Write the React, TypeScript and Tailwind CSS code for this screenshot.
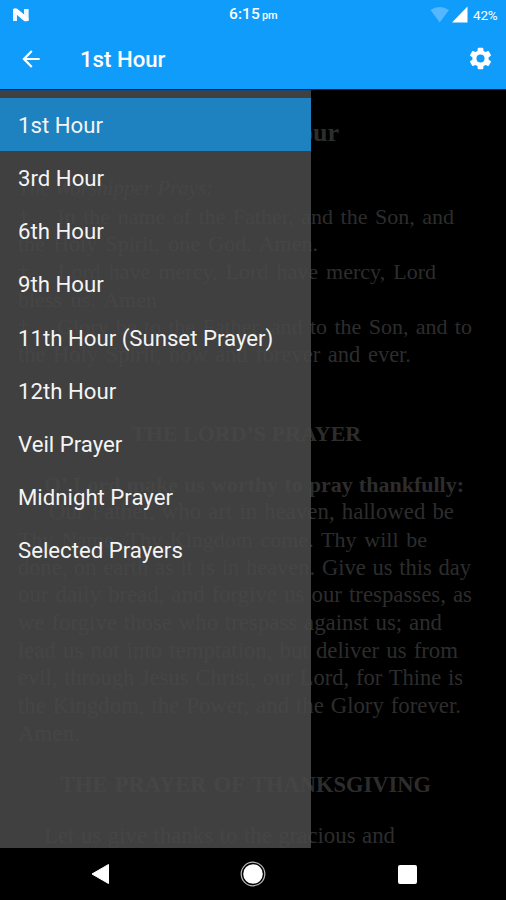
import React from "react";

type Line = { text: string; cls: string };

const lines: Line[] = [
  { text: "The First Hour", cls: "mt-[18px] ml-[167px] w-[172px] h-[49px] text-[26px] leading-[49px] font-bold" },
  { text: "The Worshipper Prays:", cls: "mt-[18px] ml-[18px] w-[194px] italic text-[21px]" },
  { text: "†\u2003\u2009In the name of the Father, and the Son, and", cls: "ml-[18px] w-[436px] text-[22px]" },
  { text: "the Holy Spirit, one God. Amen.", cls: "ml-[18px] w-[300px] text-[22px]" },
  { text: "†\u2003\u2009Lord have mercy, Lord have mercy, Lord", cls: "ml-[18px] w-[418px] text-[22px]" },
  { text: "bless us. Amen", cls: "ml-[18px] w-[139px] text-[22px]" },
  { text: "†\u2003\u2009Glory be to the Father, and to the Son, and to", cls: "ml-[18px] w-[454px] text-[22px]" },
  { text: "the Holy Spirit, now and forever and ever.", cls: "ml-[18px] w-[393px] text-[22.5px]" },
  { text: "THE LORD’S PRAYER", cls: "mt-[51px] ml-[131px] w-[230px] font-bold text-[22px]" },
  { text: "O’ Lord make us worthy to pray thankfully:", cls: "mt-[23px] ml-[44px] w-[420px] font-bold text-[22px]" },
  { text: "Our Father, who art in heaven, hallowed be", cls: "ml-[49px] w-[405px] text-[22.8px]" },
  { text: "Thy Name. Thy Kingdom come. Thy will be", cls: "ml-[18px] w-[409px] text-[22px]" },
  { text: "done, on earth as it is in heaven. Give us this day", cls: "ml-[18px] w-[453px] text-[22.5px]" },
  { text: "our daily bread, and forgive us our trespasses, as", cls: "ml-[18px] w-[454px] text-[22.8px]" },
  { text: "we forgive those who trespass against us; and", cls: "ml-[18px] w-[424px] text-[22.8px]" },
  { text: "lead us not into temptation, but deliver us from", cls: "ml-[18px] w-[440px] text-[22.8px]" },
  { text: "evil, through Jesus Christ, our Lord, for Thine is", cls: "ml-[18px] w-[445px] text-[22.5px]" },
  { text: "the Kingdom, the Power, and the Glory forever.", cls: "ml-[18px] w-[443px] text-[22.8px]" },
  { text: "Amen.", cls: "ml-[18px] w-[62px] text-[23px]" },
  { text: "THE PRAYER OF THANKSGIVING", cls: "mt-[23.5px] ml-[60px] w-[371px] font-bold text-[22.5px]" },
  { text: "Let us give thanks to the gracious and", cls: "mt-[23px] ml-[44px] w-[351px] text-[22.8px]" },
];

const items = [
  "1st Hour",
  "3rd Hour",
  "6th Hour",
  "9th Hour",
  "11th Hour (Sunset Prayer)",
  "12th Hour",
  "Veil Prayer",
  "Midnight Prayer",
  "Selected Prayers",
];

function StatusBar() {
  return (
    <div className="flex h-[29px] items-center text-white">
      <svg className="ml-[12px] h-[14px] w-[18px]" viewBox="0 0 18 14">
        <path d="M1 1h4v12H1zM12 1h4.5v12H12z" fill="#b9dfff" />
        <path d="M1 1.5Q2 0 5 .8L12 7V1h4.5v11.5Q14 14 12 12.8L5 6.8V13H1z" fill="#fff" fillOpacity=".75" />
        <path d="M1 1.5Q2 0 5 .8L16.5 10v2.5Q14 14 12 12.8L1 3.5z" fill="#fff" />
      </svg>
      <div className="ml-[199px] flex w-[60px] items-baseline pt-px font-medium">
        <span className="text-[15.5px] leading-5 tracking-[0.1px]">6:15</span>
        <span className="ml-[2px] text-[11px] leading-5">pm</span>
      </div>
      <svg className="ml-[141px] h-[17px] w-[39px]" viewBox="0 0 39 17">
        <path d="M0.5 4Q9.5-2 19 4L9.7 16.5z" fill="#55b7ff" />
        <path d="M37.5.5V16.5H22z" fill="#fff" />
      </svg>
      <span className="ml-[4px] text-[13.5px] leading-5 tracking-[-0.2px]">42%</span>
    </div>
  );
}

function AppBar() {
  return (
    <div className="flex h-[60px] items-center text-white">
      <svg className="ml-[18px] h-[26px] w-[26px]" viewBox="0 0 24 24" fill="currentColor">
        <path d="M20 11H7.83l5.59-5.59L12 4l-8 8 8 8 1.41-1.41L7.83 13H20v-2z" />
      </svg>
      <h1 className="ml-[36px] flex-1 text-[22.2px] leading-7 font-medium">1st Hour</h1>
      <svg className="mr-[12.5px] mb-[2px] h-[27px] w-[27px]" viewBox="0 0 24 24" fill="currentColor">
        <path d="M19.14 12.94c.04-.3.06-.61.06-.94s-.02-.64-.07-.94l2.03-1.58a.49.49 0 0 0 .12-.61l-1.92-3.32a.49.49 0 0 0-.59-.22l-2.39.96c-.5-.38-1.03-.7-1.62-.94l-.36-2.54a.48.48 0 0 0-.48-.41h-3.84a.47.47 0 0 0-.47.41l-.36 2.54c-.59.24-1.13.57-1.62.94l-2.39-.96a.48.48 0 0 0-.59.22L2.74 8.87a.47.47 0 0 0 .12.61l2.03 1.58c-.05.3-.09.63-.09.94s.02.64.07.94l-2.03 1.58a.49.49 0 0 0-.12.61l1.92 3.32c.12.22.37.29.59.22l2.39-.96c.5.38 1.03.7 1.62.94l.36 2.54c.05.24.24.41.48.41h3.84c.24 0 .44-.17.47-.41l.36-2.54c.59-.24 1.13-.56 1.62-.94l2.39.96c.22.08.47 0 .59-.22l1.92-3.32a.47.47 0 0 0-.12-.61l-2.01-1.58zM12 15.6a3.6 3.6 0 1 1 0-7.2 3.6 3.6 0 0 1 0 7.2z" />
      </svg>
    </div>
  );
}

function Drawer() {
  return (
    <nav className="absolute top-0 left-0 h-full w-[311px] border-t border-[#164a72] bg-[#494949]/87 pt-[7px]">
      {items.map((label, i) => (
        <div
          key={label}
          className={
            i === 0
              ? "flex h-[53.1px] items-center bg-[#1d83c4]/97 pt-[1.2px] pl-[18px] text-[22.2px] leading-7 text-[#f4f4f4]"
              : "flex h-[53.1px] items-center pt-[1.2px] pl-[18px] text-[22.2px] leading-7 text-[#f4f4f4]"
          }
        >
          {label}
        </div>
      ))}
    </nav>
  );
}

export default function App() {
  return (
    <div className="flex h-[900px] w-[506px] flex-col overflow-hidden bg-black font-[Roboto,sans-serif]">
      <header className="h-[89px] shrink-0 bg-[#109cfb]">
        <StatusBar />
        <AppBar />
      </header>
      <main className="relative h-[759px] shrink-0 overflow-hidden border-t border-[#04253c] bg-black">
        <div className="font-['Palatino_Linotype',Palatino,'Liberation_Serif',serif] text-[#2d2d2d]">
          {lines.map((l, i) => (
            <p
              key={i}
              className={
                i === 0
                  ? "whitespace-nowrap [text-align-last:justify] " + l.cls
                  : "h-[27.7px] leading-[27.7px] whitespace-nowrap [text-align-last:justify] " + l.cls
              }
            >
              {l.text}
            </p>
          ))}
        </div>
        <Drawer />
      </main>
      <footer className="flex h-[52px] shrink-0 items-center bg-black">
        <svg className="ml-[91px] h-[22px] w-[20px]" viewBox="0 0 20 22">
          <path d="M1 11L17.5 1.5v19z" fill="#fff" stroke="#fff" strokeLinejoin="round" />
        </svg>
        <svg className="ml-[129px] h-[26px] w-[26px]" viewBox="0 0 26 26">
          <circle cx="13" cy="13" r="11.8" fill="none" stroke="#bbb" strokeWidth="1.2" />
          <circle cx="13" cy="13" r="9.8" fill="#fff" />
        </svg>
        <div className="ml-[132px] h-[19px] w-[19px] rounded-[2px] bg-white" />
      </footer>
    </div>
  );
}
